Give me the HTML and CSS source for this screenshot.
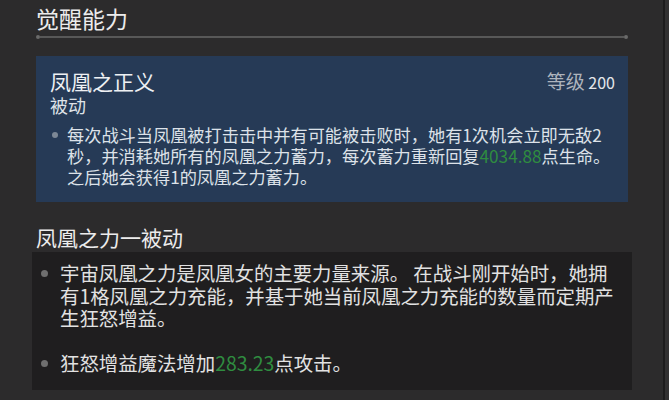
FILE: index.html
```html
<!DOCTYPE html>
<html lang="zh-CN">
<head>
<meta charset="utf-8">
<link rel="stylesheet" href="styles.css">
</head>
<body>
<div class="screen">
  <main class="page">
    <h1 class="section-title">觉醒能力</h1>
    <div class="rule"><span class="dot"></span><span class="line"></span><span class="dot"></span></div>

    <section class="skill-card">
      <div class="card-head">
        <div>
          <div class="skill-name">凤凰之正义</div>
          <div class="skill-type">被动</div>
        </div>
        <div class="level"><span class="level-label">等级</span> <span class="level-num">200</span></div>
      </div>
      <ul class="bullets blue">
        <li>每次战斗当凤凰被打击击中并有可能被击败时，她有1次机会立即无敌2<br>秒，并消耗她所有的凤凰之力蓄力，每次蓄力重新回复<span class="num">4034.88</span>点生命。<br>之后她会获得1的凤凰之力蓄力。</li>
      </ul>
    </section>

    <h2 class="sub-title">凤凰之力一被动</h2>
    <section class="dark-card">
      <ul class="bullets dark">
        <li>宇宙凤凰之力是凤凰女的主要力量来源。 在战斗刚开始时，她拥<br>有1格凤凰之力充能，并基于她当前凤凰之力充能的数量而定期产<br>生狂怒增益。</li>
        <li>狂怒增益魔法增加<span class="num">283.23</span>点攻击。</li>
      </ul>
    </section>
  </main>
  <div class="scroll-strip"></div>
</div>
</body>
</html>
```
FILE: styles.css
```css
html, body {
  margin: 0;
  padding: 0;
}
body {
  background: #2c2b2c;
  font-family: "Noto Sans CJK SC", "Noto Sans", sans-serif;
  color: #e6e6e6;
  width: 669px;
  height: 400px;
  overflow: hidden;
}
.screen {
  display: flex;
  height: 400px;
}
.page {
  width: 592px;
  padding: 2px 0 0 36px;
  flex: none;
}
.scroll-strip {
  margin-left: 35px;
  width: 4px;
  border-left: 2px solid #1d1c1d;
  background: #323132;
}
.section-title {
  margin: 0;
  font-size: 23px;
  line-height: 32px;
  font-weight: 400;
  color: #ececec;
}
.rule {
  display: flex;
  align-items: center;
  margin-top: 1px;
  height: 4px;
}
.rule .dot {
  width: 4px;
  height: 4px;
  border-radius: 50%;
  background: #6a6a6a;
  flex: none;
}
.rule .line {
  flex: 1;
  height: 2px;
  background: #585858;
}
.skill-card {
  margin-top: 17px;
  height: 146px;
  box-sizing: border-box;
  background: #263a56;
  padding: 12px 13px 0 14px;
}
.card-head {
  display: flex;
  justify-content: space-between;
  align-items: flex-start;
}
.skill-name {
  font-size: 21px;
  line-height: 26px;
  color: #eef0f3;
}
.skill-type {
  font-size: 18px;
  line-height: 22px;
  color: #dfe3e8;
}
.level {
  margin-top: 1px;
  line-height: 24px;
}
.level-label {
  font-size: 19px;
  color: #aeb4bd;
}
.level-num {
  font-size: 16px;
  color: #e4e6ea;
}
.bullets {
  list-style: none;
  margin: 0;
  padding: 0;
}
.bullets li {
  position: relative;
}
.bullets li::before {
  content: "";
  position: absolute;
  border-radius: 50%;
}
.bullets.blue {
  margin-top: 8px;
}
.bullets.blue li {
  padding-left: 17px;
  font-size: 17.2px;
  line-height: 21px;
  color: #dde2e9;
}
.bullets.blue li::before {
  left: 2px;
  top: 8px;
  width: 6px;
  height: 6px;
  background: #7d8896;
}
.num {
  color: #2f8c40;
}
.sub-title {
  margin: 21px 0 0 0;
  font-size: 21px;
  line-height: 28px;
  font-weight: 400;
  color: #ececec;
}
.dark-card {
  margin: 1px -4px 0 -4px;
  height: 138px;
  box-sizing: border-box;
  background: #1f1e1f;
  padding: 10px 4px 0 8px;
}
.bullets.dark li {
  padding-left: 20px;
  font-size: 19.4px;
  line-height: 22.5px;
  color: #e2e2e2;
}
.bullets.dark li + li {
  margin-top: 22px;
}
.bullets.dark li::before {
  left: 1px;
  top: 8px;
  width: 7px;
  height: 7px;
  background: #6f6f6f;
}
```
